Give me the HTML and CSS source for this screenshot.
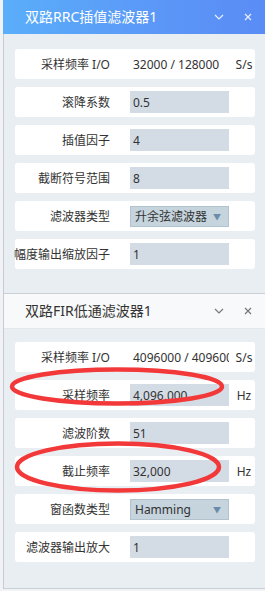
FILE: index.html
```html
<!DOCTYPE html>
<html lang="zh">
<head>
<meta charset="utf-8">
<link rel="stylesheet" href="styles.css">
</head>
<body>
<section class="panel">
  <header class="head head-blue">
    <span class="title">双路RRC插值滤波器1</span>
    <span class="tools">
      <svg class="ico" width="10" height="6" viewBox="0 0 10 6"><path d="M1 1 L5 5 L9 1" fill="none" stroke="currentColor" stroke-width="1.2"/></svg>
      <svg class="ico" width="8" height="8" viewBox="0 0 8 8"><path d="M1 1 L7 7 M7 1 L1 7" fill="none" stroke="currentColor" stroke-width="1.2"/></svg>
    </span>
  </header>
  <div class="body">
    <div class="row"><span class="label">采样频率 I/O</span><span class="val text">32000 / 128000</span><span class="unit">S/s</span></div>
    <div class="row"><span class="label">滚降系数</span><span class="val input">0.5</span><span class="unit"></span></div>
    <div class="row"><span class="label">插值因子</span><span class="val input">4</span><span class="unit"></span></div>
    <div class="row"><span class="label">截断符号范围</span><span class="val input">8</span><span class="unit"></span></div>
    <div class="row"><span class="label">滤波器类型</span><span class="val select">升余弦滤波器<i class="arrow">▼</i></span><span class="unit"></span></div>
    <div class="row"><span class="label">幅度输出缩放因子</span><span class="val input">1</span><span class="unit"></span></div>
  </div>
</section>
<section class="panel panel2">
  <header class="head head-light">
    <span class="title">双路FIR低通滤波器1</span>
    <span class="tools">
      <svg class="ico" width="10" height="6" viewBox="0 0 10 6"><path d="M1 1 L5 5 L9 1" fill="none" stroke="currentColor" stroke-width="1.2"/></svg>
      <svg class="ico" width="8" height="8" viewBox="0 0 8 8"><path d="M1 1 L7 7 M7 1 L1 7" fill="none" stroke="currentColor" stroke-width="1.2"/></svg>
    </span>
  </header>
  <div class="body body2">
    <div class="row"><span class="label">采样频率 I/O</span><span class="val text">4096000 / 4096000</span><span class="unit">S/s</span></div>
    <div class="row"><span class="label">采样频率</span><span class="val input">4,096,000</span><span class="unit">Hz</span></div>
    <div class="row"><span class="label">滤波阶数</span><span class="val input">51</span><span class="unit"></span></div>
    <div class="row"><span class="label">截止频率</span><span class="val input">32,000</span><span class="unit">Hz</span></div>
    <div class="row"><span class="label">窗函数类型</span><span class="val select">Hamming<i class="arrow">▼</i></span><span class="unit"></span></div>
    <div class="row"><span class="label">滤波器输出放大</span><span class="val input">1</span><span class="unit"></span></div>
  </div>
</section>
<svg class="marks" width="265" height="591" viewBox="0 0 265 591">
  <ellipse cx="117" cy="386.5" rx="105" ry="17" fill="none" stroke="#f23838" stroke-width="4.5"/>
  <ellipse cx="118" cy="467" rx="101" ry="23.5" fill="none" stroke="#f23838" stroke-width="4.5"/>
</svg>
</body>
</html>
```
FILE: styles.css
```css
* { box-sizing: border-box; }
html, body { margin: 0; padding: 0; }
body {
  width: 265px;
  height: 591px;
  overflow: hidden;
  background: #f0f2f5;
  padding-left: 3px;
  position: relative;
  font-family: "Noto Sans", "Noto Sans CJK SC", sans-serif;
  font-size: 12px;
  color: #333;
}
.panel {
  width: 262px;
  border-left: 1px solid #c5ccd4;
  border-bottom: 1px solid #c9cfd6;
  background: #e9eef3;
}
.head {
  height: 34px;
  display: flex;
  align-items: center;
  justify-content: space-between;
  padding-left: 21px;
  padding-right: 13px;
}
.head-blue {
  background: linear-gradient(90deg, #5aaefa 0%, #5b97f7 60%, #5a8cf5 100%);
  color: #fff;
  margin-left: -1px;
  padding-left: 22px;
}
.head-light {
  background: #f8f9fa;
  color: #333;
  border-bottom: 1px solid #e4e8ec;
  height: 35px;
}
.title {
  font-size: 14px;
  line-height: 18px;
}
.tools {
  display: flex;
  align-items: center;
  gap: 20px;
}
.head-light .tools { color: #777; }
.head-blue .tools { color: #e8f0ff; }
.ico { display: block; }
.body {
  display: flex;
  flex-direction: column;
  gap: 8px;
  padding: 15px 10px 24px 11px;
}
.body2 { padding-top: 13px; padding-bottom: 26px; }
.row {
  height: 30px;
  background: #fff;
  border-radius: 3px;
  display: flex;
  align-items: center;
}
.label {
  width: 95px;
  flex: none;
  display: flex;
  justify-content: flex-end;
  white-space: nowrap;
  color: #333;
}
.val {
  margin-left: 20px;
  width: 99px;
  height: 22px;
  flex: none;
  display: flex;
  align-items: center;
  padding-left: 3px;
  white-space: nowrap;
  overflow: hidden;
  color: #333;
}
.input { background: #d3dce5; }
.select {
  background: #c5d4dd;
  border: 1px solid #b3c3ce;
  height: 21px;
  padding-left: 4px;
  justify-content: space-between;
  padding-right: 7px;
}
.arrow {
  font-style: normal;
  font-size: 8px;
  color: #6a8cab;
}
.unit {
  width: 30px;
  flex: none;
  text-align: center;
  color: #333;
}
.marks {
  position: absolute;
  left: 0;
  top: 0;
  pointer-events: none;
}
```
